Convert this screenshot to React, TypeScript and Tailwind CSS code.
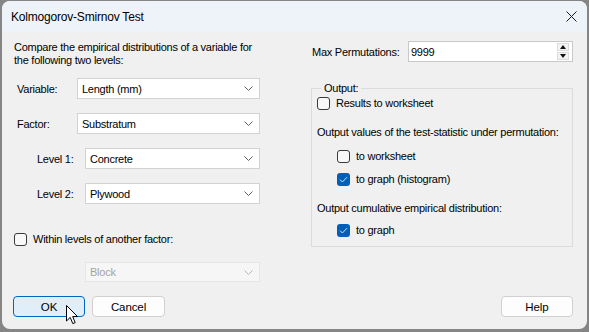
import React from "react";

const font = { fontFamily: '"Liberation Sans", Arial, sans-serif' };

function Chevron({ color = "#5f5f5f" }: { color?: string }) {
  return (
    <svg width="9" height="5" viewBox="0 0 9 5" className="shrink-0">
      <path d="M0.5 0.5 L4.5 4.5 L8.5 0.5" fill="none" stroke={color} strokeWidth="1" />
    </svg>
  );
}

function Combo({ value, disabled = false, h = "h-[21px]" }: { value: string; disabled?: boolean; h?: string }) {
  return (
    <div
      className={`flex-1 ${h} flex items-center justify-between pl-[4px] pr-[6px] border ${
        disabled ? "bg-[#f6f6f6] border-[#e6e6e6] text-[#a3a3a3]" : "bg-white border-[#d2d2d2] text-black"
      }`}
    >
      <span className="whitespace-nowrap">{value}</span>
      <Chevron color={disabled ? "#b5b5b5" : "#5f5f5f"} />
    </div>
  );
}

function Check({ checked = false }: { checked?: boolean }) {
  return checked ? (
    <div className="w-[13px] h-[13px] rounded-[3px] bg-[#005fb8] flex items-center justify-center shrink-0">
      <svg width="9" height="7" viewBox="0 0 9 7">
        <path d="M1 3.6 L3.4 6 L8 1.2" fill="none" stroke="#cfe3f7" strokeWidth="1" />
      </svg>
    </div>
  ) : (
    <div className="w-[13px] h-[13px] rounded-[3px] border border-[#3a3a3a] bg-[#f8f8f8] shrink-0" />
  );
}

function CheckRow({ label, checked = false, indent = "" }: { label: string; checked?: boolean; indent?: string }) {
  return (
    <div className={`flex items-center h-[14px] gap-[6px] ${indent}`}>
      <Check checked={checked} />
      <span className="whitespace-nowrap">{label}</span>
    </div>
  );
}

function Button({ label, primary = false, w = "w-[72px]" }: { label: string; primary?: boolean; w?: string }) {
  return (
    <div
      className={`${w} h-[21px] rounded-[4px] flex items-center justify-center text-[11.5px] tracking-[-0.1px] ${
        primary ? "bg-[#e0eef9] border border-[#0067c0]" : "bg-[#fdfdfd] border border-[#d0d0d0]"
      }`}
    >
      {label}
    </div>
  );
}

export default function App() {
  return (
    <div
      className="relative w-[589px] h-[332px] bg-[#858585] pt-[1px] pl-[2px] text-[11px] tracking-[-0.25px] leading-[14px] text-black"
      style={font}
    >
      <div className="w-[585px] h-[328px] rounded-[8px] overflow-hidden flex flex-col bg-[#f0f0f0]">
        <div className="h-[31px] shrink-0 bg-[#eef3fa] flex items-center justify-between pl-[9px] pr-[10px]">
          <span className="text-[12px] tracking-[-0.2px] whitespace-nowrap">Kolmogorov-Smirnov Test</span>
          <svg width="11" height="11" viewBox="0 0 11 11">
            <path d="M0.5 0.5 L10.5 10.5 M10.5 0.5 L0.5 10.5" stroke="#1a1a1a" strokeWidth="1" />
          </svg>
        </div>
        <div className="flex-1 flex flex-col pl-[11px] pr-[14px] pt-[9px]">
          <div className="flex">
            {/* left column */}
            <div className="w-[247px] flex flex-col">
              <div className="leading-[13px] pl-[1px] whitespace-nowrap">
                <div>Compare the empirical distributions of a variable for</div>
                <div>the following two levels:</div>
              </div>
              <div className="flex items-center mt-[11px]">
                <span className="w-[64px] pl-[4px] whitespace-nowrap">Variable:</span>
                <Combo value="Length (mm)" />
              </div>
              <div className="flex items-center mt-[14px]">
                <span className="w-[64px] pl-[4px] whitespace-nowrap">Factor:</span>
                <Combo value="Substratum" />
              </div>
              <div className="flex items-center mt-[14px]">
                <span className="w-[72px] pl-[24px] whitespace-nowrap">Level 1:</span>
                <Combo value="Concrete" />
              </div>
              <div className="flex items-center mt-[14px]">
                <span className="w-[72px] pl-[24px] whitespace-nowrap">Level 2:</span>
                <Combo value="Plywood" />
              </div>
              <div className="mt-[28px] pl-[1px]">
                <CheckRow label="Within levels of another factor:" />
              </div>
              <div className="flex mt-[16px] pl-[72px]">
                <Combo value="Block" disabled h="h-[20px]" />
              </div>
            </div>
            {/* right column */}
            <div className="w-[262px] ml-[51px] flex flex-col">
              <div className="flex items-center">
                <span className="w-[97px] pl-[1px] whitespace-nowrap">Max Permutations:</span>
                <div className="flex-1 h-[21px] bg-white border border-[#c8c8c8] flex items-center justify-between pl-[2px] pr-[3px]">
                  <span>9999</span>
                  <div className="flex flex-col gap-[1px]">
                    <div className="w-[12px] h-[8px] bg-[#f3f3f3] border border-[#dcdcdc] flex items-center justify-center">
                      <svg width="6" height="4" viewBox="0 0 6 4"><path d="M3 0 L6 4 L0 4 Z" fill="#111" /></svg>
                    </div>
                    <div className="w-[12px] h-[8px] bg-[#f3f3f3] border border-[#dcdcdc] flex items-center justify-center">
                      <svg width="6" height="4" viewBox="0 0 6 4"><path d="M0 0 L6 0 L3 4 Z" fill="#111" /></svg>
                    </div>
                  </div>
                </div>
              </div>
              <fieldset className="mt-[19px] border border-[#dcdcdc] pl-[5px] pb-[9px]">
                <legend className="ml-[4px] px-[3px]">Output:</legend>
                <div className="mt-[1px]">
                  <CheckRow label="Results to worksheet" />
                </div>
                <div className="mt-[15px] h-[14px] whitespace-nowrap">Output values of the test-statistic under permutation:</div>
                <div className="mt-[10px]">
                  <CheckRow label="to worksheet" indent="pl-[20px]" />
                </div>
                <div className="mt-[9px]">
                  <CheckRow label="to graph (histogram)" checked indent="pl-[20px]" />
                </div>
                <div className="mt-[15px] h-[14px] whitespace-nowrap">Output cumulative empirical distribution:</div>
                <div className="mt-[8px]">
                  <CheckRow label="to graph" checked indent="pl-[20px]" />
                </div>
              </fieldset>
            </div>
          </div>
          <div className="flex items-center mt-[14px]">
            <Button label="OK" primary w="w-[72px]" />
            <div className="ml-[7px]">
              <Button label="Cancel" w="w-[73px]" />
            </div>
            <div className="ml-auto">
              <Button label="Help" w="w-[72px]" />
            </div>
          </div>
        </div>
      </div>
      {/* mouse cursor */}
      <svg className="absolute left-[66px] top-[305px]" width="14" height="21" viewBox="0 0 14 21">
        <path d="M0.5 0.5 L0.5 16 L4.2 12.4 L6.8 18.6 L9.2 17.6 L6.7 11.6 L11.6 11.6 Z" fill="#fff" stroke="#000" strokeWidth="1" strokeLinejoin="miter" />
      </svg>
    </div>
  );
}
